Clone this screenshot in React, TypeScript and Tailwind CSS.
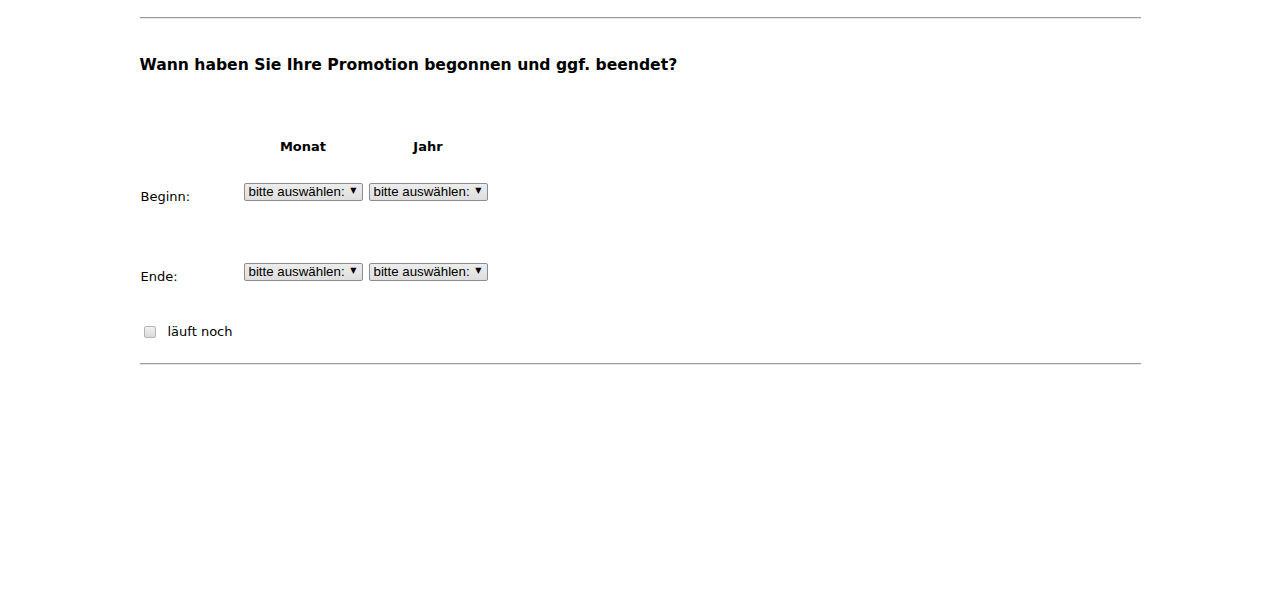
import React, { useState } from 'react';

const Auswahl: React.FC = () => {
  const [wert, setWert] = useState('');
  return (
    <div className="relative w-[119px] h-[18px]">
      <select
        value={wert}
        onChange={(e) => setWert(e.target.value)}
        className="block appearance-none w-full h-full pl-[4px] pr-[16px] text-[13.3px] leading-[16px] text-black border border-[#8c8c8c] rounded-[2px] bg-gradient-to-b from-[#ededed] to-[#dedede] outline-none"
        style={{ fontFamily: '"Liberation Sans", Arial, sans-serif' }}
      >
        <option value="">bitte auswählen:</option>
      </select>
      <span
        className="pointer-events-none absolute right-[6px] top-[2px] text-[8px] leading-[12px] text-black"
        style={{ fontFamily: '"DejaVu Sans", sans-serif' }}
      >
        ▼
      </span>
    </div>
  );
};

const Zeile: React.FC<{ label: string }> = ({ label }) => (
  <div className="flex items-start">
    <div className="w-[104px] pl-[1px] pt-[6px] text-[13px] leading-[16px]">{label}</div>
    <div className="flex gap-[6px]">
      <Auswahl />
      <Auswahl />
    </div>
  </div>
);

const App: React.FC = () => {
  const [laeuft, setLaeuft] = useState(false);

  return (
    <div
      className="min-h-[615px] bg-white text-black"
      style={{ fontFamily: '"DejaVu Sans", Verdana, sans-serif' }}
    >
      <div className="w-[1001px] mx-auto pt-[17px]">
        <div className="h-0 border-t border-b border-t-[#9a9a9a] border-b-[#e8e8e8]"></div>

        <h2 className="mt-[37px] text-[15.6px] leading-[19px] font-bold">
          Wann haben Sie Ihre Promotion begonnen und ggf. beendet?
        </h2>

        <div className="mt-[64px] flex text-[13px] leading-[16px] font-bold">
          <div className="w-[104px]"></div>
          <div className="w-[119px] text-center">Monat</div>
          <div className="w-[6px]"></div>
          <div className="w-[119px] text-center">Jahr</div>
        </div>

        <div className="mt-[28px]">
          <Zeile label="Beginn:" />
        </div>
        <div className="mt-[58px]">
          <Zeile label="Ende:" />
        </div>

        <label className="mt-[39px] flex items-center text-[13px] leading-[16px] cursor-pointer">
          <input
            type="checkbox"
            checked={laeuft}
            onChange={(e) => setLaeuft(e.target.checked)}
            className="appearance-none ml-[4px] w-[12px] h-[12px] border border-[#b5b5b5] rounded-[2px] bg-gradient-to-b from-[#f0f0f0] to-[#dadada] checked:bg-[#4a90d9]"
          />
          <span className="ml-[12px]">läuft noch</span>
        </label>

        <div className="mt-[23px] h-0 border-t border-b border-t-[#9a9a9a] border-b-[#e8e8e8]"></div>
      </div>
    </div>
  );
};

export default App;
